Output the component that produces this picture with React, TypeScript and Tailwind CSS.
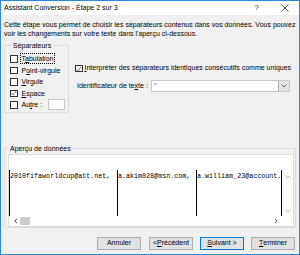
import React from 'react';

function Box({ checked }: { checked?: boolean }) {
  return (
    <div className="w-[7.5px] h-[7.5px] border border-[#333333] bg-white flex items-center justify-center shrink-0">
      {checked && (
        <svg width="6" height="6" viewBox="0 0 6 6">
          <path d="M0.5 3.2 L2.3 5 L5.5 0.8" fill="none" stroke="#555" strokeWidth="0.9" />
        </svg>
      )}
    </div>
  );
}

function Opt({ pre, key1, post, checked, focus }: { pre: string; key1: string; post: string; checked?: boolean; focus?: boolean }) {
  return (
    <div className="h-[11.5px] flex items-center whitespace-nowrap">
      <Box checked={checked} />
      <span className={`ml-[3px] px-[1px] leading-[9px] ${focus ? 'outline outline-1 outline-dotted outline-black' : ''}`}>
        {pre}<u>{key1}</u>{post}
      </span>
    </div>
  );
}

function Btn({ children, primary }: { children: React.ReactNode; primary?: boolean }) {
  return (
    <div className={`w-[44px] h-[13px] flex items-center justify-center whitespace-nowrap bg-[#e1e1e1] border ${primary ? 'border-[#0078d7]' : 'border-[#adadad]'}`}>
      {children}
    </div>
  );
}

export default function App() {
  return (
    <div className="w-[300px] h-[255px] border border-[#2b88d8] bg-[#f0f0f0] flex flex-col text-[7px] text-black font-['Liberation_Sans',Arial,sans-serif] overflow-hidden">
      {/* barre de titre */}
      <div className="h-[14px] bg-white flex items-center pl-[3px] shrink-0">
        <span className="flex-1">Assistant Conversion - Étape 2 sur 3</span>
        <span className="text-[8px] text-[#333] mr-[22px]">?</span>
        <svg width="8" height="8" viewBox="0 0 8 8" className="mr-[10px]">
          <path d="M0.5 0.5 L7.5 7.5 M7.5 0.5 L0.5 7.5" stroke="#222" strokeWidth="0.8" />
        </svg>
      </div>

      <div className="flex-1 px-[3px] flex flex-col">
        <p className="mt-[5px] leading-[9px]">
          Cette étape vous permet de choisir les séparateurs contenus dans vos données. Vous pouvez
          <br />
          voir les changements sur votre texte dans l'aperçu ci-dessous.
        </p>

        <div className="flex mt-[3px]">
          <fieldset className="w-[65px] h-[72px] border border-[#dcdcdc] pl-[5px] pt-[3px]">
            <legend className="ml-[2px] px-[1px] leading-[9px]">Séparateurs</legend>
            <Opt pre="T" key1="a" post="bulation" focus />
            <Opt pre="P" key1="o" post="int-virgule" />
            <Opt pre="" key1="V" post="irgule" />
            <Opt pre="" key1="E" post="space" checked />
            <div className="h-[11.5px] flex items-center whitespace-nowrap">
              <Box />
              <span className="ml-[3px] px-[1px] leading-[9px]">
                Au<u>t</u>re :
              </span>
              <div className="ml-[5px] w-[17px] h-[11px] shrink-0 bg-white border border-[#c8c8c8]" />
            </div>
          </fieldset>

          <div className="ml-[6px] flex-1 flex flex-col">
            <div className="mt-[23px] h-[9px] flex items-center">
              <Box checked />
              <span className="ml-[2px]">
                <u>I</u>nterpréter des séparateurs identiques consécutifs comme uniques
              </span>
            </div>
            <div className="mt-[7px] flex items-center">
              <span className="ml-[2px] w-[74px]">
                Identificateur de te<u>x</u>te :
              </span>
              <div className="w-[139px] h-[12px] bg-white border border-[#c8c8c8] flex">
                <span className="flex-1 pl-[2px] leading-[9px] text-[#3050c0]">"</span>
                <div className="w-[11px] h-full bg-[#e5e5e5] border-l border-[#adadad] flex items-center justify-center">
                  <svg width="6" height="4" viewBox="0 0 6 4">
                    <path d="M0.5 0.5 L3 3 L5.5 0.5" fill="none" stroke="#555" strokeWidth="0.9" />
                  </svg>
                </div>
              </div>
            </div>
          </div>
        </div>

        <fieldset className="mt-[31px] w-[292px] h-[84px] border border-[#dcdcdc] pl-[3px]">
          <legend className="ml-[1px] px-[1px] leading-[9px]">
            Aperçu de données
          </legend>
          <div className="mt-[1px] w-[286px] h-[73px] bg-white border border-[#dcdcdc] flex">
            <div className="flex-1 flex flex-col">
              <div className="flex-1 pt-[15px] flex font-['Liberation_Mono',monospace] text-[6.7px]">
                <div className="w-[108px] border-l border-black overflow-hidden whitespace-nowrap pt-[2px] leading-[9px]">
                  2010fifaworldcup@att.net,
                </div>
                <div className="w-[79px] border-l border-black overflow-hidden whitespace-nowrap pt-[2px] leading-[9px]">
                  a.akim028@msn.com,
                </div>
                <div className="w-[86px] border-l border-r border-black whitespace-nowrap pt-[2px] leading-[9px]">
                  a.william_23@account.
                </div>
              </div>
              <div className="h-[10px] flex items-center">
                <svg width="6" height="6" viewBox="0 0 6 6" className="ml-[4px]">
                  <path d="M4 0.8 L1.8 3 L4 5.2" fill="none" stroke="#444" strokeWidth="1" />
                </svg>
                <div className="ml-[1px] w-[10px] h-[8px] bg-[#cdcdcd]" />
                <div className="flex-1" />
                <svg width="6" height="6" viewBox="0 0 6 6" className="mr-[4px]">
                  <path d="M2 0.8 L4.2 3 L2 5.2" fill="none" stroke="#444" strokeWidth="1" />
                </svg>
              </div>
            </div>
            <div className="w-[10px] flex flex-col items-center pt-[20px] pb-[13px] justify-between">
              <svg width="6" height="4" viewBox="0 0 6 4">
                <path d="M0.5 3.5 L3 1 L5.5 3.5" fill="none" stroke="#b0b0b0" strokeWidth="0.9" />
              </svg>
              <svg width="6" height="4" viewBox="0 0 6 4">
                <path d="M0.5 0.5 L3 3 L5.5 0.5" fill="none" stroke="#b0b0b0" strokeWidth="0.9" />
              </svg>
            </div>
          </div>
        </fieldset>

        <div className="mt-[9px] flex justify-end gap-[7px] mr-[1px]">
          <div className="mr-[1px]">
            <Btn>Annuler</Btn>
          </div>
          <Btn>
            &lt; <u>P</u>récédent
          </Btn>
          <Btn primary>
            <u>S</u>uivant &gt;
          </Btn>
          <Btn>
            <u>T</u>erminer
          </Btn>
        </div>
      </div>
    </div>
  );
}
